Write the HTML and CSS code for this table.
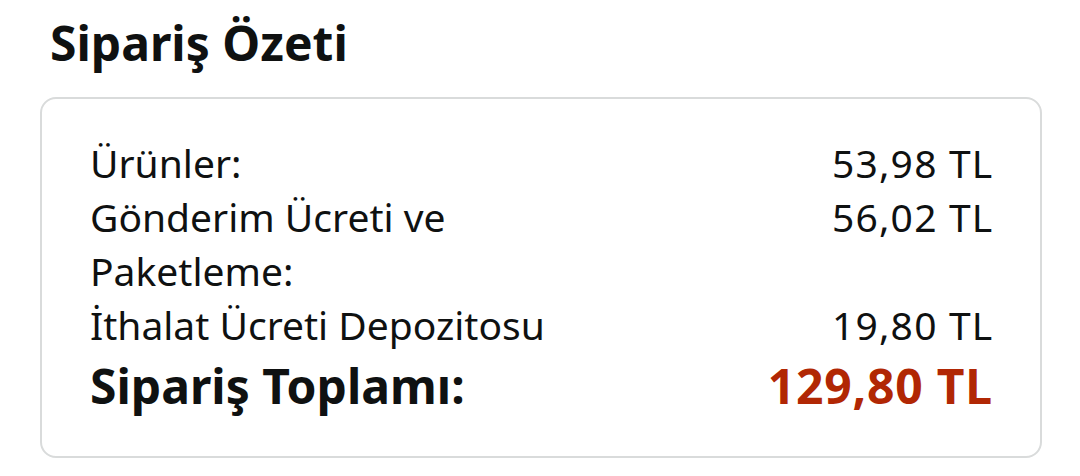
FILE: index.html
```html
<!DOCTYPE html>
<html lang="tr">
<head>
<meta charset="utf-8">
<title>Sipariş Özeti</title>
<link rel="stylesheet" href="styles.css">
</head>
<body>
<main class="summary">
  <h1 class="summary-title">Sipariş Özeti</h1>
  <section class="summary-card">
    <div class="line">
      <span class="line-label">Ürünler:</span>
      <span class="line-value">53,98 TL</span>
    </div>
    <div class="line">
      <span class="line-label">Gönderim Ücreti ve Paketleme:</span>
      <span class="line-value">56,02 TL</span>
    </div>
    <div class="line">
      <span class="line-label">İthalat Ücreti Depozitosu</span>
      <span class="line-value">19,80 TL</span>
    </div>
    <div class="line line-total">
      <span class="line-label">Sipariş Toplamı:</span>
      <span class="line-value">129,80 TL</span>
    </div>
  </section>
</main>
</body>
</html>
```

FILE: styles.css
```css
* { box-sizing: border-box; }
html, body { margin: 0; padding: 0; background: #ffffff; }
body {
  font-family: "Noto Sans", "Open Sans", "Liberation Sans", sans-serif;
  color: #0f1111;
}
.summary {
  padding: 14px 38px 0 40px;
}
.summary-title {
  margin: 0 0 25px 10px;
  font-size: 48px;
  line-height: 58px;
  font-weight: 700;
}
.summary-card {
  border: 2px solid #d9dbdb;
  border-radius: 16px;
  padding: 37px 48px 40px 48px;
  display: flex;
  flex-direction: column;
}
.line {
  display: grid;
  grid-template-columns: 58fr 42fr;
  font-size: 39px;
  line-height: 54px;
}
.line-value {
  text-align: right;
  letter-spacing: 1.2px;
  margin-right: -1.5px;
}
.line-total {
  margin-top: 4px;
  font-size: 48px;
  line-height: 60px;
  font-weight: 700;
}
.line-total .line-value {
  color: #b12704;
  letter-spacing: 0.8px;
  margin-right: -1px;
}
```
